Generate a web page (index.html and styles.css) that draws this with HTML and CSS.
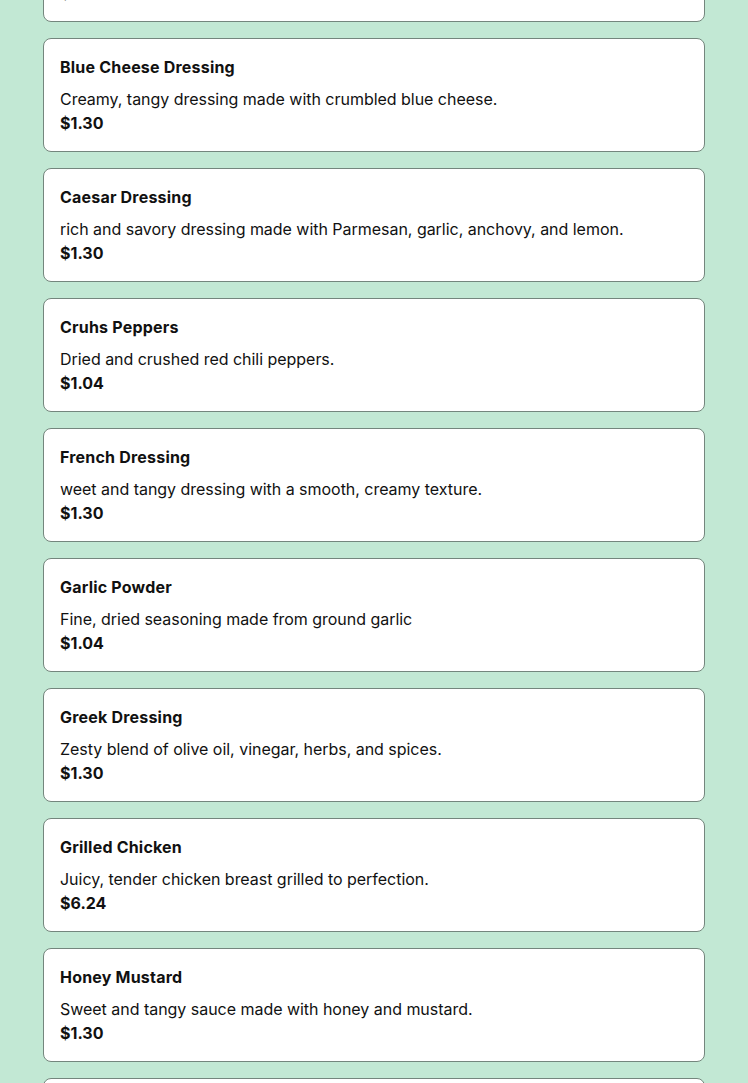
FILE: index.html
```html
<!DOCTYPE html>
<html lang="en">
<head>
<meta charset="utf-8">
<title>Menu</title>
<link rel="stylesheet" href="styles.css">
</head>
<body>
<main class="list">
  <article class="card">
    <h3 class="name">BBQ Sauce</h3>
    <p class="desc">Smoky, sweet and tangy barbecue sauce.</p>
    <p class="price">$1.30</p>
  </article>
  <article class="card">
    <h3 class="name">Blue Cheese Dressing</h3>
    <p class="desc">Creamy, tangy dressing made with crumbled blue cheese.</p>
    <p class="price">$1.30</p>
  </article>
  <article class="card">
    <h3 class="name">Caesar Dressing</h3>
    <p class="desc">rich and savory dressing made with Parmesan, garlic, anchovy, and lemon.</p>
    <p class="price">$1.30</p>
  </article>
  <article class="card">
    <h3 class="name">Cruhs Peppers</h3>
    <p class="desc">Dried and crushed red chili peppers.</p>
    <p class="price">$1.04</p>
  </article>
  <article class="card">
    <h3 class="name">French Dressing</h3>
    <p class="desc">weet and tangy dressing with a smooth, creamy texture.</p>
    <p class="price">$1.30</p>
  </article>
  <article class="card">
    <h3 class="name">Garlic Powder</h3>
    <p class="desc">Fine, dried seasoning made from ground garlic</p>
    <p class="price">$1.04</p>
  </article>
  <article class="card">
    <h3 class="name">Greek Dressing</h3>
    <p class="desc">Zesty blend of olive oil, vinegar, herbs, and spices.</p>
    <p class="price">$1.30</p>
  </article>
  <article class="card">
    <h3 class="name">Grilled Chicken</h3>
    <p class="desc">Juicy, tender chicken breast grilled to perfection.</p>
    <p class="price">$6.24</p>
  </article>
  <article class="card">
    <h3 class="name">Honey Mustard</h3>
    <p class="desc">Sweet and tangy sauce made with honey and mustard.</p>
    <p class="price">$1.30</p>
  </article>
  <article class="card">
    <h3 class="name">Hot Sauce</h3>
    <p class="desc">Spicy sauce made from chili peppers and vinegar.</p>
    <p class="price">$1.04</p>
  </article>
</main>
</body>
</html>
```

FILE: styles.css
```css
html, body {
  margin: 0;
  padding: 0;
  background: #c2e8d4;
}
body {
  font-family: Inter, "Noto Sans", "Liberation Sans", sans-serif;
  color: #111111;
  overflow: hidden;
}
.list {
  display: flex;
  flex-direction: column;
  gap: 16px;
  padding: 0 43px;
  margin-top: -92px;
}
.card {
  background: #ffffff;
  border: 1px solid #74867d;
  border-radius: 8px;
  padding: 16px;
  display: flex;
  flex-direction: column;
}
.name {
  margin: 0 0 8px;
  font-size: 16px;
  line-height: 24px;
  font-weight: 700;
  letter-spacing: 0.2px;
}
.desc {
  margin: 0;
  font-size: 16px;
  line-height: 24px;
  font-weight: 400;
  letter-spacing: -0.03px;
}
.price {
  margin: 0;
  font-size: 16px;
  line-height: 24px;
  font-weight: 700;
}
```
